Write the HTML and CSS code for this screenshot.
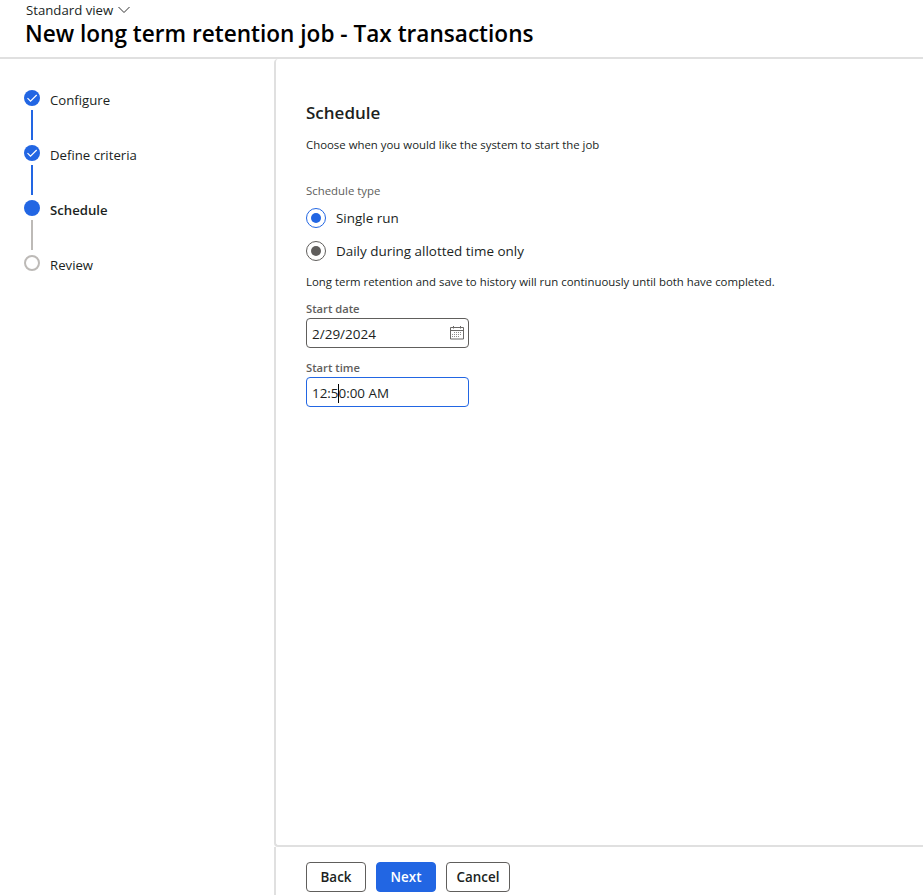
FILE: index.html
```html
<!DOCTYPE html>
<html lang="en">
<head>
<meta charset="utf-8">
<title>New long term retention job</title>
<link rel="stylesheet" href="styles.css">
</head>
<body>
<header class="header">
  <div class="view">Standard view<svg class="chevron" width="12" height="8" viewBox="0 0 12 8"><path d="M.5 1 6 6.500 11.500 1"/></svg></div>
  <h1 class="title">New long term retention job - Tax transactions</h1>
</header>
<div class="layout">
  <nav class="steps">
    <div class="step done"><svg class="dot" width="16" height="16" viewBox="0 0 16 16"><circle cx="8" cy="8" r="8"/><path d="M3.500 8.200 6.500 11.200 12.700 5"/></svg><span>Configure</span></div>
    <div class="step done"><svg class="dot" width="16" height="16" viewBox="0 0 16 16"><circle cx="8" cy="8" r="8"/><path d="M3.500 8.200 6.500 11.200 12.700 5"/></svg><span>Define criteria</span></div>
    <div class="step current"><svg class="dot" width="16" height="16" viewBox="0 0 16 16"><circle cx="8" cy="8" r="8"/></svg><span>Schedule</span></div>
    <div class="step todo"><svg class="dot" width="16" height="16" viewBox="0 0 16 16"><circle cx="8" cy="8" r="7"/></svg><span>Review</span></div>
  </nav>
  <div class="side">
    <main class="content">
      <h2 class="heading">Schedule</h2>
      <p class="intro">Choose when you would like the system to start the job</p>
      <div class="group-label">Schedule type</div>
      <div class="radio selected"><span class="ring"></span>Single run</div>
      <div class="radio"><span class="ring"></span>Daily during allotted time only</div>
      <p class="note">Long term retention and save to history will run continuously until both have completed.</p>
      <div class="label">Start date</div>
      <div class="field"><span>2/29/2024</span><svg class="calendar" width="14" height="14" viewBox="0 0 14 14"><path class="frame" d="M.5 1.500h13v11.500H.5zM.5 4.500h13M3.500 0v2.500M10.500 0v2.500"/><path class="days" d="M4 6.500h8M2 8.500h10M2 10.500h8"/></svg></div>
      <div class="label">Start time</div>
      <div class="field focus"><span>12:5<i class="caret"></i>0:00 AM</span></div>
    </main>
    <footer class="footer"><button class="btn">Back</button><button class="btn primary">Next</button><button class="btn cancel">Cancel</button></footer>
  </div>
</div>
</body>
</html>
```
FILE: styles.css
```css
* { box-sizing: border-box; }
body { margin: 0; height: 895px; overflow: hidden; display: flex; flex-direction: column; background: #fff; color: #201f1e; font: 13.2px/20px "Open Sans", "Noto Sans", sans-serif; white-space: nowrap; }
h1, h2, p { margin: 0; }

.header { height: 59px; padding-left: 26px; border-bottom: 2px solid #e0e0e0; }
.view { height: 20px; display: flex; align-items: center; gap: 5px; }
.chevron { margin-top: -1px; }
.chevron path { fill: none; stroke: #333; }
.title { margin-left: -1px; color: #000; font-size: 22.6px; line-height: 27px; font-weight: 600; }

.layout { flex: 1; display: flex; min-height: 0; }
.steps { width: 274px; padding: 31px 0 0 24px; }
.step { height: 55px; display: grid; grid-template-columns: 16px 1fr; grid-template-rows: 20px 30px; column-gap: 10px; }
.dot { fill: #2266e3; }
.dot path { fill: none; stroke: #fff; stroke-width: 1.2; }
.step::after { content: ""; width: 2px; height: 30px; margin-left: 7px; background: #2266e3; }
.current { font-weight: 600; }
.current::after { background: #bdbab7; }
.todo::after { display: none; }
.todo .dot { fill: none; stroke: #bdbab7; stroke-width: 2; }

.side { flex: 1; display: flex; flex-direction: column; }
.content { flex: 1; padding: 40px 0 0 30px; border: 2px solid #e0e0e0; border-width: 0 0 2px 2px; border-radius: 4px 0 0 4px; }
.heading { font-size: 17px; line-height: 28px; font-weight: 600; }
.intro, .note, .label, .group-label { font-size: 11.400px; }
.intro { margin-top: 8px; }
.group-label { margin: 26px 0 0; color: #605e5c; }
.radio { height: 33px; display: flex; align-items: center; gap: 10px; font-size: 13.450px; }
.ring { width: 20px; height: 20px; display: grid; place-items: center; border: 1px solid currentColor; border-radius: 50%; color: #605e5c; }
.ring::before { content: ""; width: 10px; height: 10px; border-radius: 50%; background: currentColor; }
.selected .ring { color: #2266e3; }
.note { margin-top: 5px; }
.label { margin-top: 10px; line-height: 19px; font-weight: 600; font-size: 11.200px; color: #605e5c; }
.note + .label { margin-top: 7px; }
.field { width: 163px; height: 30px; display: flex; align-items: center; justify-content: space-between; padding: 1px 4px 0 5px; border: 1px solid #605e5c; border-radius: 4px; font-size: 13.500px; }
.focus { border-color: #2266e3; font-size: 13.4px; }
.calendar { fill: none; stroke: #6b6967; margin-top: -2px; }
.days { stroke: #8f8d8b; stroke-dasharray: 1 1; }
.caret { display: inline-block; width: 1px; height: 19px; margin: 0 0 0 -1px; vertical-align: -5px; background: #000; }

.footer { height: 48px; display: flex; gap: 10px; padding: 15px 0 0 30px; border-left: 2px solid #e0e0e0; }
.btn { width: 60px; height: 30px; padding: 0; border: 1px solid #605e5c; border-radius: 4px; background: #fff; color: #201f1e; font: 600 13.400px/20px "Open Sans", "Noto Sans", sans-serif; }
.primary { border-color: #2266e3; background: #2266e3; color: #fff; }
.cancel { width: 64px; }
```
